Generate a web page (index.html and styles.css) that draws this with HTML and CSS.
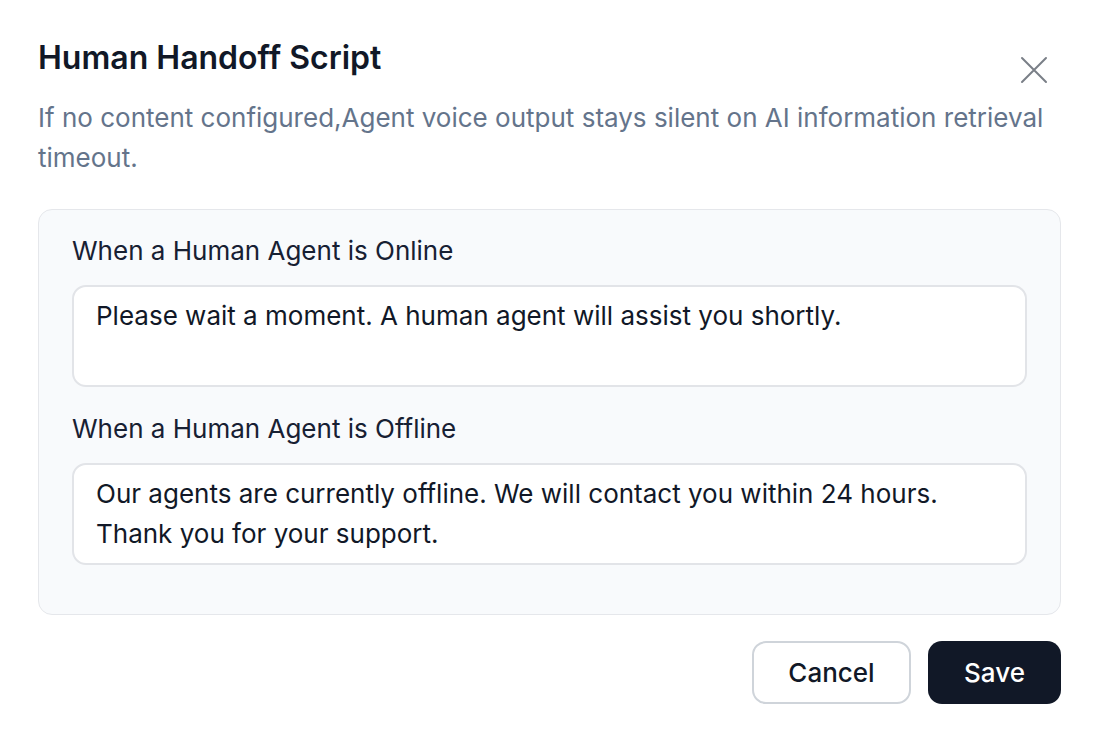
FILE: index.html
```html
<!DOCTYPE html>
<html lang="en">
<head>
<meta charset="utf-8">
<title>Human Handoff Script</title>
<link rel="stylesheet" href="styles.css">
</head>
<body>
<div class="dialog">
  <div class="header">
    <h1 class="title">Human Handoff Script</h1>
    <button class="close" aria-label="Close">
      <svg width="28" height="28" viewBox="0 0 28 28" fill="none" stroke="#7a7f87" stroke-width="2" stroke-linecap="round"><path d="M2 2L26 26M26 2L2 26"/></svg>
    </button>
  </div>
  <p class="desc">If no content configured,Agent voice output stays silent on AI information retrieval timeout.</p>
  <div class="panel">
    <div class="field">
      <label class="label">When a Human Agent is Online</label>
      <div class="textarea">Please wait a moment. A human agent will assist you shortly.</div>
    </div>
    <div class="field">
      <label class="label">When a Human Agent is Offline</label>
      <div class="textarea">Our agents are currently offline. We will contact you within 24 hours. Thank you for your support.</div>
    </div>
  </div>
  <div class="footer">
    <button class="btn btn-cancel">Cancel</button>
    <button class="btn btn-save">Save</button>
  </div>
</div>
</body>
</html>
```
FILE: styles.css
```css
* { box-sizing: border-box; }
html, body { margin: 0; padding: 0; background: #ffffff; }
body {
  font-family: Inter, "Noto Sans", sans-serif;
  color: #0f172a;
}
.dialog {
  width: 1102px;
  height: 736px;
  padding: 38px 41px 0 38px;
  display: flex;
  flex-direction: column;
}
.header {
  display: flex;
  justify-content: space-between;
  align-items: flex-start;
  height: 40px;
}
.title {
  margin: 0;
  font-size: 32px;
  line-height: 40px;
  font-weight: 600;
  color: #111827;
}
.close {
  border: 0;
  background: none;
  padding: 0;
  margin: 18px 13px 0 0;
  width: 28px;
  height: 28px;
  display: flex;
}
.desc {
  margin: 20px 0 0;
  font-size: 26px;
  line-height: 40px;
  color: #64748b;
}
.panel {
  margin-top: 31px;
  background: #f8fafc;
  border: 1px solid #e5e7eb;
  border-radius: 14px;
  padding: 23px 33px 25px;
  display: flex;
  flex-direction: column;
  gap: 24px;
}
.field {
  display: flex;
  flex-direction: column;
  gap: 16px;
}
.field:last-child { margin-bottom: 24px; }
.label {
  font-size: 26px;
  line-height: 36px;
  color: #172033;
}
.textarea {
  background: #ffffff;
  border: 2px solid #e2e4e8;
  border-radius: 14px;
  height: 102px;
  padding: 9px 22px;
  font-size: 26px;
  line-height: 40px;
  color: #111827;
}
.footer {
  margin-top: 26px;
  display: flex;
  justify-content: flex-end;
  gap: 17px;
}
.btn {
  height: 63px;
  border-radius: 14px;
  font-family: inherit;
  font-size: 26px;
  font-weight: 500;
  padding: 0;
}
.btn-cancel {
  width: 159px;
  background: #ffffff;
  border: 2px solid #cfd4da;
  color: #111827;
}
.btn-save {
  width: 133px;
  background: #111827;
  border: 0;
  color: #ffffff;
}
```
